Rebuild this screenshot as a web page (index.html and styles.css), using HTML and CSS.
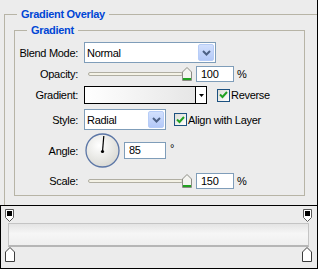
FILE: index.html
```
<!DOCTYPE html>
<html lang="en">
<head>
  <meta charset="UTF-8" />
  <title>Gradient Overlay</title>
  <link rel="stylesheet" href="styles.css">
</head>
<body>
  <div class="dialog">
    <div class="panel">
      <fieldset class="outer">
        <legend>Gradient Overlay</legend>
        <fieldset class="inner">
          <legend>Gradient</legend>

          <div class="row r-blend">
            <span class="lbl">Blend Mode:</span>
            <div class="select blend">
              <span class="val">Normal</span>
              <span class="drop"><svg width="9" height="6" viewBox="0 0 9 6"><path d="M1 1l3.5 3.5L8 1" fill="none" stroke="#4d6185" stroke-width="2"/></svg></span>
            </div>
          </div>

          <div class="row r-opacity">
            <span class="lbl">Opacity:</span>
            <span class="track"></span>
            <svg class="thumb" width="10" height="14" viewBox="0 0 10 14"><path d="M0.5 13.5V5L5 0.5 9.5 5v8.5z" fill="#f4f4f0" stroke="#8c8c84"/><path d="M1 12h8" stroke="#21a121" stroke-width="2"/></svg>
            <span class="num">100</span>
            <span class="unit">%</span>
          </div>

          <div class="row r-grad">
            <span class="lbl">Gradient:</span>
            <div class="grad">
              <span class="swatch"></span>
              <span class="gdrop"><svg width="5" height="3" viewBox="0 0 5 3"><path d="M0 0h5L2.5 3z" fill="#000"/></svg></span>
            </div>
            <span class="check rev">
              <span class="box"><svg width="9" height="8" viewBox="0 0 9 8"><path d="M1 3.5l2.5 2.5L8 1" fill="none" stroke="#21a121" stroke-width="2"/></svg></span>
              Reverse
            </span>
          </div>

          <div class="row r-style">
            <span class="lbl">Style:</span>
            <div class="select style-sel">
              <span class="val">Radial</span>
              <span class="drop"><svg width="9" height="6" viewBox="0 0 9 6"><path d="M1 1l3.5 3.5L8 1" fill="none" stroke="#4d6185" stroke-width="2"/></svg></span>
            </div>
            <span class="check align">
              <span class="box"><svg width="9" height="8" viewBox="0 0 9 8"><path d="M1 3.5l2.5 2.5L8 1" fill="none" stroke="#21a121" stroke-width="2"/></svg></span>
              Align with Layer
            </span>
          </div>

          <div class="row r-angle">
            <span class="lbl">Angle:</span>
            <svg class="dial" width="35" height="35" viewBox="0 0 35 35">
              <defs>
                <radialGradient id="dialfill" cx="40%" cy="35%" r="70%">
                  <stop offset="0" stop-color="#ffffff"/>
                  <stop offset="1" stop-color="#d8d8d2"/>
                </radialGradient>
              </defs>
              <circle cx="17.5" cy="17.5" r="16.5" fill="url(#dialfill)" stroke="#5b76a6" stroke-width="1.3"/>
              <line x1="17.5" y1="18.5" x2="18.8" y2="3" stroke="#000" stroke-width="1.2"/>
              <circle cx="17.5" cy="18.5" r="1.6" fill="#000"/>
            </svg>
            <span class="num angle">85</span>
            <span class="deg">°</span>
          </div>

          <div class="row r-scale">
            <span class="lbl">Scale:</span>
            <span class="track"></span>
            <svg class="thumb" width="10" height="14" viewBox="0 0 10 14"><path d="M0.5 13.5V5L5 0.5 9.5 5v8.5z" fill="#f4f4f0" stroke="#8c8c84"/><path d="M1 12h8" stroke="#21a121" stroke-width="2"/></svg>
            <span class="num">150</span>
            <span class="unit">%</span>
          </div>
        </fieldset>
      </fieldset>
    </div>

    <div class="editor">
      <div class="stops top">
        <svg width="9" height="13" viewBox="0 0 9 13"><path d="M0.5 0.5h8v8L4.5 12.5 0.5 8.5z" fill="#fff" stroke="#5a5a5a"/><rect x="2" y="2" width="5" height="5" fill="#000"/></svg>
        <svg width="9" height="13" viewBox="0 0 9 13"><path d="M0.5 0.5h8v8L4.5 12.5 0.5 8.5z" fill="#fff" stroke="#5a5a5a"/><rect x="2" y="2" width="5" height="5" fill="#000"/></svg>
      </div>
      <div class="bar"></div>
      <div class="stops bottom">
        <svg width="10" height="15" viewBox="0 0 10 15"><path d="M5 0.5L9.5 5v9.5h-9V5z" fill="#fff" stroke="#3c3c3c"/></svg>
        <svg width="10" height="15" viewBox="0 0 10 15"><path d="M5 0.5L9.5 5v9.5h-9V5z" fill="#fff" stroke="#3c3c3c"/></svg>
      </div>
    </div>
  </div>
</body>
</html>
```
FILE: styles.css
```
body {
  margin: 0;
  background: #ececec;
  font-family: "Liberation Sans", Arial, sans-serif;
  font-size: 11px;
  letter-spacing: -0.3px;
  color: #000;
}
.dialog {
  width: 318px;
  height: 269px;
}
.panel {
  height: 205px;
  box-sizing: border-box;
  padding: 8px 0 0 4px;
  border-right: 1px solid #000;
  overflow: hidden;
}
fieldset {
  margin: 0;
  border: 1px solid #b7b4a6;
  min-width: 0;
}
legend {
  font-weight: bold;
  color: #0046d5;
  line-height: 13px;
  padding: 0 4px;
}
.outer {
  padding: 0 0 40px 9px;
  margin-right: -20px;
}
.outer > legend {
  margin-left: 3px;
}
.inner {
  width: 291px;
  box-sizing: border-box;
  margin-top: 3px;
  padding: 5px 0 6px 0;
}
.inner > legend {
  margin-left: 12px;
}
.row {
  display: flex;
  align-items: center;
}
.lbl {
  flex: none;
  width: 63px;
  margin-right: 6px;
  text-align: right;
}
.r-blend { height: 21px; }
.r-opacity { height: 17px; margin-top: 2px; }
.r-grad { height: 18px; margin-top: 4px; }
.r-style { height: 21px; margin-top: 5px; }
.r-angle { height: 35px; margin-top: 3px; }
.r-scale { height: 16px; margin-top: 5px; }

.select {
  display: flex;
  box-sizing: border-box;
  height: 21px;
  padding: 1px;
  border: 1px solid #7f9db9;
  background: #fff;
}
.select .val {
  flex: 1;
  padding-left: 1px;
  line-height: 19px;
}
.select .drop {
  display: flex;
  align-items: center;
  justify-content: center;
  width: 14px;
  border: 1px solid #b7cdf7;
  border-radius: 2px;
  background: linear-gradient(#d2e0fd, #b4c9f8);
}
.blend { width: 132px; }
.style-sel { width: 82px; }

.track {
  width: 93px;
  height: 2px;
  margin-left: 4px;
  border: 1px solid #b0aea2;
  border-radius: 2px;
  background: #f4f2e6;
}
.thumb {
  margin-left: -1px;
}
.num {
  box-sizing: border-box;
  width: 38px;
  height: 16px;
  margin-left: 4px;
  padding-left: 4px;
  border: 1px solid #7f9db9;
  background: #fff;
  line-height: 14px;
}
.unit {
  margin-left: 3px;
}

.grad {
  display: flex;
  box-sizing: border-box;
  width: 123px;
  height: 18px;
  border: 1px solid #000;
}
.grad .swatch {
  flex: 1;
  background: linear-gradient(to right, #fff, #e6e6e6);
}
.grad .gdrop {
  display: flex;
  align-items: center;
  justify-content: center;
  width: 10px;
  border-left: 1px solid #000;
  background: #fff;
}
.check {
  display: flex;
  align-items: center;
}
.check .box {
  display: flex;
  align-items: center;
  justify-content: center;
  box-sizing: border-box;
  width: 13px;
  height: 13px;
  margin-right: 1px;
  border: 1px solid #1c5180;
  background: linear-gradient(135deg, #dcdcd6, #fff);
}
.rev { margin-left: 10px; }
.align { margin-left: 8px; }

.dial {
  margin-left: 1px;
}
.num.angle {
  width: 42px;
  height: 17px;
  line-height: 15px;
  margin-left: 4px;
}
.deg {
  margin-left: 4px;
  margin-top: -6px;
}

.editor {
  box-sizing: border-box;
  height: 64px;
  padding: 3px 5px 0 4px;
  border: 1px solid #000;
}
.stops {
  display: flex;
  justify-content: space-between;
}
.stops.top { height: 13px; }
.stops.bottom { height: 15px; }
.stops svg { display: block; }
.bar {
  box-sizing: border-box;
  height: 24px;
  margin: 1px 3px 0 3px;
  border: 1px solid #c4c4c4;
  border-bottom: 2px solid #b6b6b6;
  background: linear-gradient(#e4e4e4, #f6f6f6 45%, #efefef);
}
```
